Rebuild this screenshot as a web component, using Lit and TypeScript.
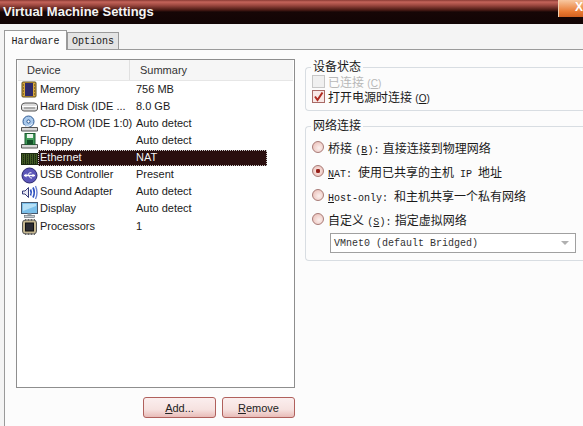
import { html, css, LitElement, svg } from 'lit';
import { customElement } from 'lit/decorators.js';

const icons: Record<string, unknown> = {
  memory: svg`
    <rect x="2" y="1" width="14" height="15" rx="1" fill="#d8a83e" stroke="#5c4a1a"/>
    <rect x="5" y="2" width="8" height="13" fill="#2e2a6a"/>
    <path d="M3 4h1M3 7h1M3 10h1M3 13h1M14 4h1M14 7h1M14 10h1M14 13h1" stroke="#4a3a10"/>`,
  disk: svg`
    <path d="M1.5 7.5 Q2 5 5 5 H14 Q17 5 17.5 7.5 V11 Q17 13 15 13 H4 Q2 13 1.5 11 Z" fill="#dcdcdc" stroke="#555"/>
    <path d="M2 8.5 H17" stroke="#fff"/>
    <rect x="4" y="9" width="11" height="2" fill="#aaa"/>`,
  cdrom: svg`
    <circle cx="8.5" cy="6.5" r="5.5" fill="#a9c9ec" stroke="#2d5a94"/>
    <circle cx="8.5" cy="6.5" r="1.6" fill="#fff" stroke="#2d5a94"/>
    <path d="M1.5 12.5 H17.5 V16 H1.5 Z" fill="#d8d8d8" stroke="#555"/>
    <path d="M4 10.5 Q8 13 12.5 9" stroke="#fff" fill="none"/>`,
  floppy: svg`
    <path d="M1.5 12.5 H17.5 V16 H1.5 Z" fill="#d8d8d8" stroke="#555"/>
    <rect x="5" y="1.5" width="10" height="11" fill="#3f9a58" stroke="#1d5a30"/>
    <rect x="7" y="2" width="6" height="4" fill="#e8f4ea"/>
    <rect x="7" y="8" width="6" height="4" fill="#14522a"/>`,
  ethernet: svg`
    <rect x="1" y="3" width="17" height="12" fill="#1c2a12"/>
    <path d="M2 5h15M2 7h15M2 9h15M2 11h15M2 13h15" stroke="#6f8f3a" stroke-dasharray="1 1"/>
    <path d="M3 4v10M7 4v10M11 4v10M15 4v10" stroke="#3d5a20" stroke-dasharray="1 1"/>`,
  usb: svg`
    <circle cx="9.5" cy="8.5" r="7.5" fill="#5b56b8" stroke="#2c2870"/>
    <path d="M4 8.5 H15" stroke="#fff" stroke-width="1.4"/>
    <path d="M4 8.5 L6.5 6.6 V10.4 Z M15 8.5 L12.5 6.8 V10.2 Z" fill="#fff"/>
    <path d="M7.5 8.5 L9.5 5.8 H11.5 M8.5 8.5 L10.5 11 H12" stroke="#fff" fill="none"/>`,
  sound: svg`
    <path d="M2.5 7 H5 L8.5 3.5 V13.5 L5 10 H2.5 Z" fill="#e8e8f4" stroke="#343a78"/>
    <path d="M10.5 5.5 Q12 8.5 10.5 11.5" stroke="#2f52c0" stroke-width="1.7" fill="none"/>
    <path d="M13 3.5 Q15.5 8.5 13 13.5" stroke="#2f52c0" stroke-width="1.7" fill="none"/>
    <path d="M15.5 2 Q18.5 8.5 15.5 15" stroke="#6c84d4" stroke-width="1.4" fill="none"/>`,
  display: svg`
    <rect x="1.5" y="1.5" width="16" height="11" fill="#7cc0ea" stroke="#45586e"/>
    <path d="M3 3 H16 V5 L3 10 Z" fill="#b6e0f6"/>
    <path d="M7.5 12.5 H11.5 V14.5 H7.5 Z" fill="#9aa4ae"/>
    <rect x="4.5" y="14.5" width="10" height="2" fill="#c4cad0" stroke="#5a6670" stroke-width=".6"/>`,
  cpu: svg`
    <rect x="2.5" y="2" width="14" height="14" rx="3" fill="#c4b690" stroke="#555"/>
    <rect x="5.5" y="5" width="8" height="8" fill="#2b2b33" stroke="#111"/>
    <path d="M5.5 1v2M8.5 1v2M11.5 1v2M14.5 1v2M5.5 15v2M8.5 15v2M11.5 15v2M14.5 15v2" stroke="#666"/>`,
};

const devices = [
  { icon: 'memory', name: 'Memory', summary: '756 MB' },
  { icon: 'disk', name: 'Hard Disk (IDE ...', summary: '8.0 GB' },
  { icon: 'cdrom', name: 'CD-ROM (IDE 1:0)', summary: 'Auto detect' },
  { icon: 'floppy', name: 'Floppy', summary: 'Auto detect' },
  { icon: 'ethernet', name: 'Ethernet', summary: 'NAT', selected: true },
  { icon: 'usb', name: 'USB Controller', summary: 'Present' },
  { icon: 'sound', name: 'Sound Adapter', summary: 'Auto detect' },
  { icon: 'display', name: 'Display', summary: 'Auto detect' },
  { icon: 'cpu', name: 'Processors', summary: '1' },
];

@customElement('app-root')
export class AppRoot extends LitElement {
  render() {
    return html`
      <div class="window">
        <div class="titlebar">
          <span class="title">Virtual Machine Settings</span>
          <span class="close">X</span>
        </div>
        <div class="tabs">
          <div class="tab active">Hardware</div>
          <div class="tab">Options</div>
        </div>
        <div class="panel">
          <div class="left">
            <div class="list">
              <div class="list-head">
                <span class="col-device">Device</span>
                <span class="col-summary">Summary</span>
              </div>
              ${devices.map(
                (d) => html`
                  <div class="row">
                    <svg class="icon" width="18" height="17" viewBox="0 0 18 17">${icons[d.icon]}</svg>
                    <div class="cells ${d.selected ? 'selected' : ''}">
                      <span class="name">${d.name}</span>
                      <span class="summary">${d.summary}</span>
                    </div>
                  </div>
                `
              )}
            </div>
            <div class="buttons">
              <button><u>A</u>dd...</button>
              <button><u>R</u>emove</button>
            </div>
          </div>
          <div class="right">
            <fieldset class="status">
              <legend>设备状态</legend>
              <label class="check disabled">
                <span class="box"></span><span>已连接 <span class="latin">(<u>C</u>)</span></span>
              </label>
              <label class="check">
                <span class="box">
                  <svg width="11" height="11" viewBox="0 0 11 11"><path d="M2 5.5 L4.5 9 L9.5 1.5" fill="none" stroke="#b02a20" stroke-width="2"/></svg>
                </span>
                <span>打开电源时连接 <span class="latin">(<u>O</u>)</span></span>
              </label>
            </fieldset>
            <fieldset class="network">
              <legend>网络连接</legend>
              <label class="radio"><span class="dot"></span><span>桥接 <span class="mono">(<u>B</u>):</span> 直接连接到物理网络</span></label>
              <label class="radio"><span class="dot on"></span><span class="mono"><u>N</u>AT: <span class="cjk">使用已共享的主机</span> IP <span class="cjk">地址</span></span></label>
              <label class="radio"><span class="dot"></span><span class="mono"><u>H</u>ost-only: <span class="cjk">和主机共享一个私有网络</span></span></label>
              <label class="radio"><span class="dot"></span><span>自定义 <span class="mono">(<u>S</u>):</span> 指定虚拟网络</span></label>
              <div class="select">
                <span class="mono">VMnet0 (default Bridged)</span>
                <span class="arrow"></span>
              </div>
            </fieldset>
          </div>
        </div>
      </div>
    `;
  }

  static styles = css`
    :host {
      display: block;
      width: 583px;
      height: 426px;
      overflow: hidden;
    }
    .window {
      width: 583px;
      height: 426px;
      display: flex;
      flex-direction: column;
      background: #f4f4f4;
      font-family: 'Liberation Sans', 'Noto Sans CJK SC', sans-serif;
      font-size: 11px;
      color: #1a1a1a;
    }
    .titlebar {
      height: 24px;
      flex: none;
      display: flex;
      justify-content: space-between;
      align-items: flex-start;
      background: linear-gradient(#8a3a34 0, #c4645a 2px, #a04a42 5px, #4a1a14 10px, #160606 12px, #120404 24px);
    }
    .title {
      margin: 4px 0 0 3px;
      color: #f4f4f4;
      font-weight: bold;
      font-size: 13px;
      line-height: 16px;
    }
    .close {
      width: 25px;
      height: 17px;
      background: linear-gradient(#f8c8a0, #e87830 70%, #d06020);
      color: #fff;
      font-weight: bold;
      font-size: 12px;
      line-height: 15px;
      text-align: right;
      border-left: 1px solid #f4d0b0;
      box-sizing: border-box;
    }
    .tabs {
      display: flex;
      align-items: flex-end;
      height: 25px;
      flex: none;
      padding-left: 4px;
      font-family: 'Liberation Mono', monospace;
      font-size: 10px;
    }
    .tab {
      height: 17px;
      width: 52px;
      box-sizing: border-box;
      border: 1px solid #9a9a9a;
      border-bottom: none;
      background: #e4e4e4;
      line-height: 18px;
      text-align: center;
    }
    .tab.active {
      height: 20px;
      width: 63px;
      background: #fdfdfd;
      line-height: 21px;
      margin-bottom: -1px;
      position: relative;
      z-index: 1;
    }
    .panel {
      flex: 1;
      display: flex;
      gap: 10px;
      margin-left: 4px;
      padding: 9px 0 0 11px;
      border-top: 1px solid #9a9a9a;
      border-left: 1px solid #9a9a9a;
      background: #fcfcfc;
    }
    .left {
      width: 279px;
      flex: none;
    }
    .list {
      box-sizing: border-box;
      height: 329px;
      border: 1px solid #8e8e8e;
      background: #fff;
      padding: 0 1px;
    }
    .list-head {
      display: flex;
      height: 20px;
      line-height: 20px;
      background: #f6f6f6;
      border-bottom: 1px solid #e6e6e6;
      color: #333;
    }
    .col-device {
      box-sizing: border-box;
      width: 112px;
      padding-left: 9px;
      border-right: 1px solid #e0e0e0;
    }
    .col-summary {
      padding-left: 10px;
    }
    .row {
      display: flex;
      align-items: center;
      height: 17.125px;
      padding-left: 2px;
    }
    .icon {
      flex: none;
    }
    .cells {
      display: flex;
      width: 229px;
      height: 16px;
      line-height: 15px;
      box-sizing: border-box;
      padding-left: 2px;
    }
    .cells.selected {
      background: #2a0f0f;
      color: #f4f4f4;
      outline: 1px dotted #c8c8c8;
      outline-offset: -1px;
    }
    .name {
      width: 96px;
      flex: none;
      white-space: nowrap;
    }
    .buttons {
      display: flex;
      justify-content: flex-end;
      gap: 6px;
      margin-top: 9px;
    }
    button {
      width: 73px;
      height: 21px;
      padding: 0;
      border: 1px solid #b0605c;
      border-radius: 3px;
      background: linear-gradient(#fbeeee, #f6e2e0 60%, #e8bcb8);
      font-family: 'Liberation Sans', sans-serif;
      font-size: 11px;
      color: #222;
    }
    .right {
      flex: 1;
      min-width: 0;
      margin-right: -6px;
      font-size: 12px;
    }
    fieldset {
      margin: 0;
      box-sizing: border-box;
      border: 1px solid #d8dde2;
      border-right: none;
      border-radius: 4px 0 0 4px;
      padding: 0 0 0 6px;
    }
    legend {
      padding: 0 2px;
      line-height: 16px;
      font-size: 12px;
      margin-left: -1px;
    }
    .status {
      height: 52px;
    }
    .status legend {
      margin-bottom: -1px;
    }
    .network {
      height: 143px;
      margin-top: 7px;
    }
    .check {
      display: flex;
      align-items: center;
      gap: 3px;
      height: 15px;
    }
    .check.disabled {
      color: #b8b8b8;
    }
    .box {
      width: 13px;
      height: 13px;
      box-sizing: border-box;
      border: 1px solid #a86a66;
      background: #f8e8e6;
      display: flex;
      align-items: center;
      justify-content: center;
    }
    .disabled .box {
      border-color: #c8c8c8;
      background: #f0f0f0;
    }
    .radio {
      display: flex;
      align-items: center;
      gap: 4px;
      height: 24px;
    }
    .network .radio:first-of-type {
      margin-top: 1px;
    }
    .dot {
      flex: none;
      width: 12px;
      height: 12px;
      box-sizing: border-box;
      border-radius: 50%;
      border: 1px solid #a87a76;
      background: radial-gradient(circle at 60% 60%, #fbf0ee, #e8b8b0);
    }
    .dot.on {
      background: radial-gradient(circle, #8a1a14 0, #a02a22 28%, #f4dcd8 34%, #e8b8b0);
    }
    .mono {
      font-family: 'Liberation Mono', monospace;
      font-size: 10px;
    }
    .cjk {
      font-family: 'Noto Sans CJK SC', sans-serif;
      font-size: 12px;
    }
    .latin {
      font-size: 10px;
    }
    .select {
      box-sizing: border-box;
      display: flex;
      justify-content: space-between;
      align-items: center;
      width: 246px;
      height: 20px;
      margin: 2px 0 0 18px;
      padding: 0 6px 0 3px;
      border: 1px solid #a0a0a0;
      background: #fff;
      color: #333;
    }
    .arrow {
      width: 0;
      height: 0;
      border: 4px solid transparent;
      border-top: 4px solid #b0b0b0;
      margin-top: 4px;
    }
  `;
}
